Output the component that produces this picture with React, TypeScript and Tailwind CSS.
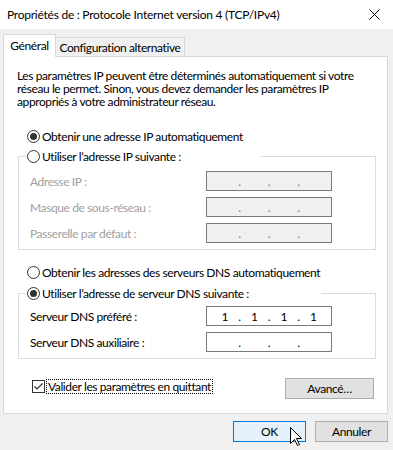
import React from "react";

const font = { fontFamily: '"Lato", "Liberation Sans", sans-serif' };

function Radio({ checked }: { checked?: boolean }) {
  return (
    <span className="flex h-[13px] w-[13px] shrink-0 items-center justify-center rounded-full border border-[#333] bg-white">
      {checked && <span className="h-[7px] w-[7px] rounded-full bg-[#333]" />}
    </span>
  );
}

function IpBox({ value, disabled }: { value?: string[]; disabled?: boolean }) {
  const parts = value ?? ["", "", "", ""];
  return (
    <div
      className={`flex h-[20px] w-[126px] items-center border pl-[10px] pr-[10px] ${
        disabled ? "border-[#7a7a7a] bg-[#f0f0f0] text-[#6d6d6d]" : "border-[#7a7a7a] bg-white text-black"
      }`}
    >
      {parts.map((p, i) => (
        <React.Fragment key={i}>
          <span className="w-[16px] text-center">{p}</span>
          {i < 3 && <span className="w-[14px] text-center">.</span>}
        </React.Fragment>
      ))}
    </div>
  );
}

function Row({ label, disabled, value }: { label: string; disabled?: boolean; value?: string[] }) {
  return (
    <div className="flex h-[20px] items-center pl-[11px]">
      <span className={`w-[176px] ${disabled ? "text-[#a0a0a0]" : "text-black"}`}>{label}</span>
      <IpBox disabled={disabled} value={value} />
    </div>
  );
}

function Button({ children, primary }: { children: React.ReactNode; primary?: boolean }) {
  return (
    <div
      className={`flex h-[21px] items-center justify-center border ${
        primary ? "border-[#0078d7] bg-[#e5f1fb]" : "border-[#adadad] bg-[#e1e1e1]"
      }`}
    >
      {children}
    </div>
  );
}

export default function App() {
  return (
    <div
      className="relative h-[450px] w-[393px] overflow-hidden bg-[#f0f0f0] text-[12px] leading-[13px] tracking-[-0.4px] text-black"
      style={font}
    >
      {/* title bar */}
      <div className="flex h-[29px] items-center justify-between bg-white pl-[7px] pr-[13px]">
        <span className="tracking-[-0.25px]">Propriétés de : Protocole Internet version 4 (TCP/IPv4)</span>
        <svg width="11" height="11" viewBox="0 0 11 11">
          <path d="M0.5 0.5 L10.5 10.5 M10.5 0.5 L0.5 10.5" stroke="#000" strokeWidth="1" />
        </svg>
      </div>

      {/* tabs */}
      <div className="mt-[5px] flex h-[22px] items-end pl-[3px]">
        <div className="relative z-10 -mb-px flex h-[23px] w-[53px] items-start justify-center border border-b-0 border-[#d9d9d9] bg-white pt-[4px]">
          Général
        </div>
        <div className="flex h-[19px] w-[129px] items-center justify-center whitespace-nowrap border border-b-0 border-l-0 border-[#d9d9d9] bg-[#f0f0f0]">
          Configuration alternative
        </div>
      </div>

      {/* panel */}
      <div className="ml-[3px] flex h-[358px] w-[385px] flex-col border border-[#d9d9d9] bg-white">
        <p className="ml-[13px] mt-[12px] w-[350px]">
          Les paramètres IP peuvent être déterminés automatiquement si votre réseau le permet. Sinon, vous devez demander les paramètres IP appropriés à votre administrateur réseau.
        </p>

        <div className="ml-[23px] mt-[20px] flex h-[16px] items-center gap-[2px]">
          <Radio checked />
          <span>Obtenir une adresse IP automatiquement</span>
        </div>

        <fieldset className="ml-[14px] mt-[4px] w-[358px] border border-[#dcdcdc] pb-[6px]">
          <legend className="ml-[8px] flex h-[16px] w-[233px] items-center gap-[2px] bg-white">
            <Radio />
            <span>Utiliser l’adresse IP suivante :</span>
          </legend>
          <div className="mt-[7px] flex flex-col gap-[6px]">
            <Row label="Adresse IP :" disabled />
            <Row label="Masque de sous-réseau :" disabled />
            <Row label="Passerelle par défaut :" disabled />
          </div>
        </fieldset>

        <div className="ml-[23px] mt-[14px] flex h-[16px] items-center gap-[2px]">
          <Radio />
          <span>Obtenir les adresses des serveurs DNS automatiquement</span>
        </div>

        <fieldset className="ml-[14px] mt-[5px] w-[358px] border border-[#dcdcdc] pb-[6px]">
          <legend className="ml-[8px] flex h-[16px] w-[294px] items-center gap-[2px] bg-white">
            <Radio checked />
            <span>Utiliser l’adresse de serveur DNS suivante :</span>
          </legend>
          <div className="mt-[5px] flex flex-col gap-[6px]">
            <Row label="Serveur DNS préféré :" value={["1", "1", "1", "1"]} />
            <Row label="Serveur DNS auxiliaire :" />
          </div>
        </fieldset>

        <div className="mt-[19px] flex items-start pl-[28px] pr-[13px]">
          <div className="flex items-center gap-[1px] pt-[1px]">
            <span className="flex h-[13px] w-[13px] items-center justify-center border border-[#333] bg-white">
              <svg width="11" height="11" viewBox="0 0 11 11">
                <path d="M1.5 5.5 L4 8 L9.5 2.5" stroke="#333" strokeWidth="1.2" fill="none" />
              </svg>
            </span>
            <span className="border border-dotted border-black px-px">Valider les paramètres en quittant</span>
          </div>
          <div className="ml-auto w-[89px]">
            <Button>Avancé…</Button>
          </div>
        </div>
      </div>

      {/* footer buttons */}
      <div className="mt-[7px] flex justify-end gap-[9px] pr-[5px]">
        <div className="w-[73px]">
          <Button primary>OK</Button>
        </div>
        <div className="w-[73px]">
          <Button>Annuler</Button>
        </div>
      </div>

      {/* mouse cursor */}
      <svg className="absolute left-[290px] top-[427px]" width="13" height="20" viewBox="0 0 13 20">
        <path d="M0.5 0.5 L0.5 16.5 L4.5 12.5 L7.5 18.5 L9.5 17.5 L6.5 11.5 L11.5 11.5 Z" fill="#fff" stroke="#000" strokeWidth="1" />
      </svg>
    </div>
  );
}
